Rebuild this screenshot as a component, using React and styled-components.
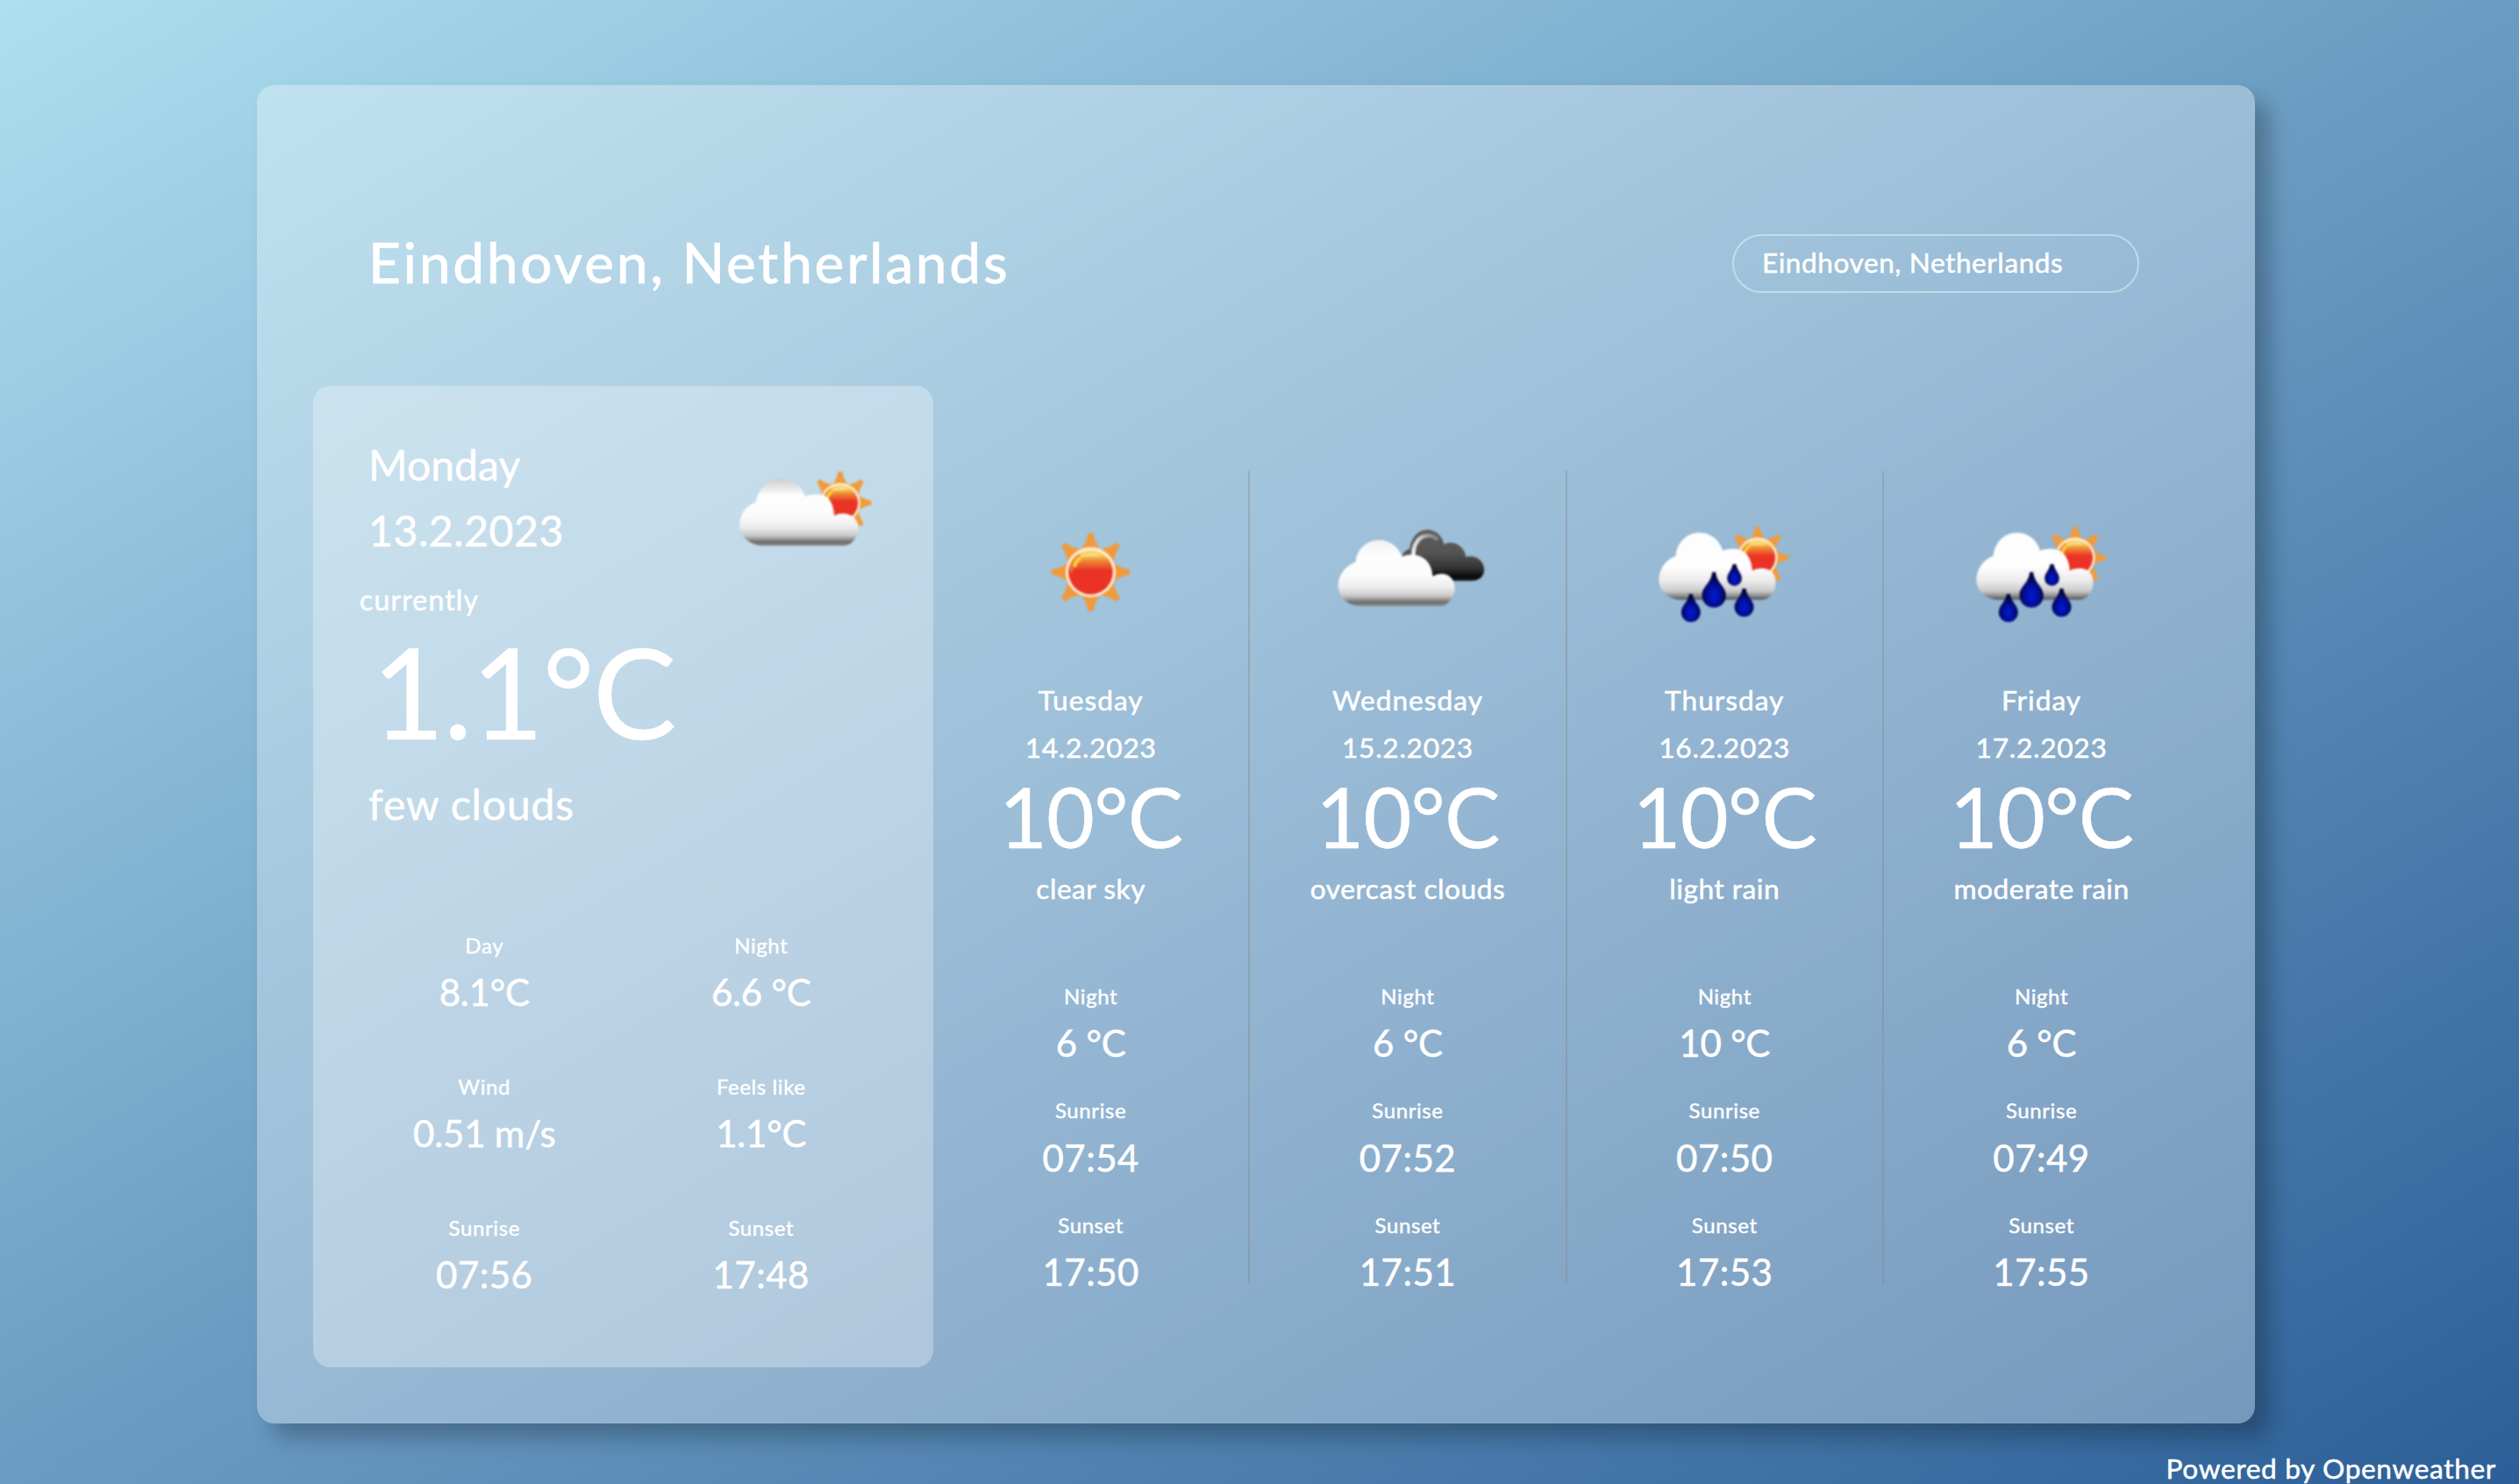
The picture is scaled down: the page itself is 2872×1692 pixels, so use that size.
import React from 'react';
import styled, { createGlobalStyle } from 'styled-components';

const GlobalStyle = createGlobalStyle`
  *, *::before, *::after { box-sizing: border-box; }
  body {
    margin: 0;
    color: #fff;
    font-family: Lato, "Open Sans", sans-serif;
    font-weight: 400;
  }
`;

const Page = styled.div`
  display: flex;
  flex-direction: column;
  align-items: center;
  height: 1692px;
  padding-top: 97px;
  overflow: hidden;
  background: linear-gradient(to bottom right, #addfef, #6a9cc3 50%, #2c5f97);
`;

const Card = styled.main`
  display: flex;
  flex-direction: column;
  width: 2278px;
  height: 1526px;
  margin-right: 8px;
  border-radius: 20px;
  background: rgba(255, 255, 255, 0.32);
  box-shadow: 17px 17px 24px rgba(0, 0, 0, 0.25);
`;

const Header = styled.header`
  display: flex;
  align-items: center;
  justify-content: space-between;
  height: 343px;
  padding: 64px 132px 0 127px;
`;

const City = styled.h1`
  margin: 0;
  padding-bottom: 3px;
  font-size: 64px;
  font-weight: 500;
  line-height: 88px;
  letter-spacing: 2.65px;
  -webkit-text-stroke: 0.4px #fff;
`;

const Search = styled.div`
  display: flex;
  align-items: center;
  width: 464px;
  height: 67px;
  padding: 0 32px 4px;
  border: 2px solid rgba(255, 255, 255, 0.42);
  border-radius: 34px;
  font-size: 31.5px;
  letter-spacing: 0.6px;
  -webkit-text-stroke: 0.5px #fff;
`;

const Body = styled.div`
  display: flex;
  padding-left: 64px;
`;

const Today = styled.section`
  width: 707px;
  height: 1119px;
  padding: 51px 46px 0 63px;
  border-radius: 20px;
  background: rgba(255, 255, 255, 0.3);
`;

const TodayTop = styled.div`
  display: flex;
  justify-content: space-between;
  height: 213px;
`;

const TodayText = styled.div`
  padding-top: 1px;
`;

const TodayLine = styled.div`
  font-size: 48px;
  line-height: 75px;
  letter-spacing: ${(p) => p.$spacing}px;
  -webkit-text-stroke: 0.5px #fff;
`;

const Currently = styled.div`
  margin: 21px 0 0 -10px;
  font-size: 32px;
  line-height: 42px;
  letter-spacing: 1.15px;
  -webkit-text-stroke: 0.5px #fff;
`;

const TodayTemp = styled.div`
  margin: 8px 0 15px 4px;
  font-size: 143px;
  line-height: 152px;
  letter-spacing: -1.7px;
  -webkit-text-stroke: 0.4px #fff;
`;

const DetailGrid = styled.div`
  display: grid;
  grid-template-columns: repeat(2, 315.5px);
  justify-content: center;
  row-gap: 63.8px;
  margin-top: 108px;
  margin-right: 18px;
`;

const DetailBox = styled.div`
  display: flex;
  flex-direction: column;
  align-items: center;
  gap: 9.3px;
`;

const Label = styled.div`
  font-size: 24px;
  line-height: 32px;
  letter-spacing: 0.6px;
  -webkit-text-stroke: 0.4px #fff;
`;

const Value = styled.div`
  font-size: 42px;
  line-height: 56px;
  white-space: pre;
  letter-spacing: ${(p) => (p.$clock ? 0.48 : -0.2)}px;
  -webkit-text-stroke: 0.5px #fff;
`;

const Forecast = styled.section`
  display: grid;
  grid-template-columns: repeat(4, 361.3px);
  height: 926px;
  margin-top: 97px;
`;

const DayColumn = styled.article`
  display: flex;
  flex-direction: column;
  align-items: center;
  height: 926px;
  padding-top: 15px;
  border-right: 2px solid rgba(128, 128, 128, 0.35);

  &:last-child {
    border-right-color: transparent;
  }
`;

const DayLine = styled.div`
  font-size: 31.7px;
  line-height: 54px;
  letter-spacing: ${(p) => p.$spacing}px;
  -webkit-text-stroke: 0.5px #fff;
`;

const DayNames = styled.div`
  display: flex;
  flex-direction: column;
  align-items: center;
  margin-top: 19px;
`;

const DayTemp = styled.div`
  margin: 1px 0 6px;
  font-size: 95px;
  line-height: 100px;
  letter-spacing: -0.9px;
  -webkit-text-stroke: 0.4px #fff;
`;

const DayDetails = styled.div`
  display: flex;
  flex-direction: column;
  gap: 33px;
  margin-top: 80px;
`;

const Footer = styled.footer`
  align-self: stretch;
  margin-top: 33px;
  padding-right: 26px;
  text-align: right;
  font-size: 31.6px;
  line-height: 36px;
  letter-spacing: 0.65px;
  -webkit-text-stroke: 0.5px #fff;
`;

const Art = styled.svg`
  display: block;
  width: 200px;
  height: 200px;
  flex: none;
  filter: blur(1px);
`;

const RAY = 'M-32,-80 Q-15,-98 -9,-133 L9,-133 Q15,-98 32,-80 Z';

function SunShape({ id, x, y, scale = 1 }) {
  return (
    <g transform={`translate(${x} ${y}) scale(${scale})`}>
      <defs>
        <linearGradient id={id} x1="0" y1="0" x2="0" y2="1">
          <stop offset="0" stopColor="#f9e07e" />
          <stop offset="0.12" stopColor="#f7cc5a" />
          <stop offset="0.24" stopColor="#ee8a36" />
          <stop offset="0.46" stopColor="#ea3324" />
          <stop offset="1" stopColor="#ea3324" />
        </linearGradient>
      </defs>
      {[0, 45, 90, 135, 180, 225, 270, 315].map((a) => (
        <path key={a} d={RAY} fill="#f19a3c" transform={`rotate(${a})`} />
      ))}
      <circle r="86" fill="#f8dcb4" />
      <circle r="82" fill="#fdf3e6" />
      <circle r="76" fill={`url(#${id})`} />
      <path d="M-66,0 Q-66,-46 -36,-60" fill="none" stroke="#ee8a2e" strokeWidth="10" opacity="0.7" />
      <path d="M-54,-22 Q-50,-38 -38,-46" fill="none" stroke="#f9d23c" strokeWidth="12" strokeLinecap="round" />
      <path d="M-32,-54 Q-8,-60 26,-58" fill="none" stroke="#fbe7a4" strokeWidth="5" strokeLinecap="round" />
    </g>
  );
}

function CloudFill({ id, top = '#fdfdfd' }) {
  return (
    <linearGradient id={id} x1="0" y1="0" x2="0" y2="1">
      <stop offset="0" stopColor={top} />
      <stop offset="0.25" stopColor="#fefefe" />
      <stop offset="0.55" stopColor="#fbfbfb" />
      <stop offset="0.72" stopColor="#ececec" />
      <stop offset="0.84" stopColor="#cbcbcb" />
      <stop offset="0.89" stopColor="#a2a2a2" />
      <stop offset="0.94" stopColor="#6c6c6c" />
      <stop offset="1" stopColor="#8a8a8a" />
    </linearGradient>
  );
}

function FewClouds() {
  return (
    <Art viewBox="114 -30 600 600">
      <SunShape id="sunFew" x={534} y={217} scale={0.8} />
      <defs>
        <CloudFill id="cloudFew" top="#cdcdcd" />
      </defs>
      <path
        fill="url(#cloudFew)"
        d="M190,285 C194,248 215,225 245,215 C255,165 290,135 332,135 C370,135 402,158 414,195 C432,187 474,184 490,198 C504,212 512,234 514,261 C535,248 572,252 588,275 C600,295 597,322 582,343 C570,358 558,364 545,364 L265,364 C225,360 185,330 190,285Z"
      />
    </Art>
  );
}

function ClearSky() {
  return (
    <Art viewBox="-49.5 -84 600 600">
      <SunShape id="sunClear" x={249} y={217} />
    </Art>
  );
}

function Overcast() {
  return (
    <Art viewBox="73.5 -54 600 600">
      <defs>
        <CloudFill id="cloudOvercast" top="#f1f1f1" />
        <linearGradient id="cloudDark" x1="0" y1="0" x2="0" y2="1">
          <stop offset="0" stopColor="#5c5c5c" />
          <stop offset="0.45" stopColor="#545454" />
          <stop offset="0.75" stopColor="#343434" />
          <stop offset="0.92" stopColor="#080808" />
          <stop offset="1" stopColor="#222" />
        </linearGradient>
        <linearGradient id="rim" x1="0" y1="1" x2="1" y2="0">
          <stop offset="0" stopColor="#f4f4f4" />
          <stop offset="0.55" stopColor="#d2d2d2" />
          <stop offset="1" stopColor="#777" />
        </linearGradient>
      </defs>
      <path
        fill="url(#cloudDark)"
        d="M354,198 C356,180 366,172 380,168 C385,128 410,102 440,102 C470,102 490,122 498,152 C524,136 566,152 573,195 C598,186 632,202 635,235 C636,260 620,276 595,277 L520,277 L420,277Z"
      />
      <path fill="none" stroke="url(#rim)" strokeWidth="14" strokeLinecap="round" d="M393,190 C392,150 412,124 440,122 C454,120 464,124 472,132" />
      <path
        fill="url(#cloudOvercast)"
        d="M136,285 C140,250 165,223 195,213 C200,165 235,137 275,137 C312,137 344,160 354,195 C377,180 415,186 435,205 C450,220 458,240 459,262 C480,246 516,250 528,275 C540,300 535,330 515,348 C505,360 495,363 480,363 L205,363 C170,360 132,330 136,285Z"
      />
    </Art>
  );
}

const DROPS = [
  [202, 322, 418, 33],
  [281, 247, 368, 41],
  [351, 220, 294, 25],
  [384, 303, 400, 33],
];

function Rain({ id }) {
  return (
    <Art viewBox="16.5 -54 600 600">
      <SunShape id={`${id}Sun`} x={430} y={197} scale={0.8} />
      <defs>
        <linearGradient id={`${id}Cloud`} x1="0" y1="0" x2="0" y2="1">
          <stop offset="0" stopColor="#fdfdfd" />
          <stop offset="0.5" stopColor="#fefefe" />
          <stop offset="0.72" stopColor="#ebebeb" />
          <stop offset="0.87" stopColor="#cbcbcb" />
          <stop offset="0.93" stopColor="#9a9a9a" />
          <stop offset="1" stopColor="#555" />
        </linearGradient>
        <radialGradient id={`${id}Drop`} cx="0.5" cy="0.66" r="0.5">
          <stop offset="0" stopColor="#0219d0" />
          <stop offset="0.4" stopColor="#0212b0" />
          <stop offset="0.75" stopColor="#030b7c" />
          <stop offset="1" stopColor="#04063c" />
        </radialGradient>
      </defs>
      <path
        fill={`url(#${id}Cloud)`}
        d="M93,265 C98,228 120,203 150,192 C155,142 192,112 232,112 C270,112 300,138 311,174 C335,163 378,163 396,190 C406,205 411,222 412,242 C430,230 470,230 484,252 C496,272 495,300 480,322 C470,336 460,341 445,341 L160,341 C125,338 88,310 93,265Z"
      />
      {DROPS.map(([x, top, bottom, r]) => {
        const cy = bottom - r;
        return (
          <path
            key={x}
            fill={`url(#${id}Drop)`}
            d={`M${x - 6},${top} L${x + 6},${top} C${x + 10},${cy - r} ${x + r},${cy - r * 0.75} ${x + r},${cy} A${r},${r} 0 0 1 ${x - r},${cy} C${x - r},${cy - r * 0.75} ${x - 10},${cy - r} ${x - 6},${top}Z`}
          />
        );
      })}
    </Art>
  );
}

function Detail({ label, value }) {
  return (
    <DetailBox>
      <Label>{label}</Label>
      <Value $clock={value.includes(':')}>{value}</Value>
    </DetailBox>
  );
}

const TODAY = [
  ['Day', '8.1°C'],
  ['Night', '6.6 °C'],
  ['Wind', '0.51 m/s'],
  ['Feels like', '1.1°C'],
  ['Sunrise', '07:56'],
  ['Sunset', '17:48'],
];

const DAYS = [
  { name: 'Tuesday', date: '14.2.2023', temp: '10°C', text: 'clear sky', night: '6 °C', rise: '07:54', set: '17:50', icon: <ClearSky /> },
  { name: 'Wednesday', date: '15.2.2023', temp: '10°C', text: 'overcast clouds', night: '6 °C', rise: '07:52', set: '17:51', icon: <Overcast /> },
  { name: 'Thursday', date: '16.2.2023', temp: '10°C', text: 'light rain', night: '10 °C', rise: '07:50', set: '17:53', icon: <Rain id="thu" /> },
  { name: 'Friday', date: '17.2.2023', temp: '10°C', text: 'moderate rain', night: '6 °C', rise: '07:49', set: '17:55', icon: <Rain id="fri" /> },
];

export default function App() {
  return (
    <>
      <GlobalStyle />
      <Page>
        <Card>
          <Header>
            <City>Eindhoven, Netherlands</City>
            <Search>Eindhoven, Netherlands</Search>
          </Header>
          <Body>
            <Today>
              <TodayTop>
                <TodayText>
                  <TodayLine $spacing={0.1}>Monday</TodayLine>
                  <TodayLine $spacing={0.6}>13.2.2023</TodayLine>
                  <Currently>currently</Currently>
                </TodayText>
                <FewClouds />
              </TodayTop>
              <TodayTemp>1.1°C</TodayTemp>
              <TodayLine $spacing={0.9}>few clouds</TodayLine>
              <DetailGrid>
                {TODAY.map(([label, value]) => (
                  <Detail key={label} label={label} value={value} />
                ))}
              </DetailGrid>
            </Today>
            <Forecast>
              {DAYS.map((d) => (
                <DayColumn key={d.name}>
                  {d.icon}
                  <DayNames>
                    <DayLine $spacing={1}>{d.name}</DayLine>
                    <DayLine $spacing={0.7}>{d.date}</DayLine>
                  </DayNames>
                  <DayTemp>{d.temp}</DayTemp>
                  <DayLine $spacing={0.5}>{d.text}</DayLine>
                  <DayDetails>
                    <Detail label="Night" value={d.night} />
                    <Detail label="Sunrise" value={d.rise} />
                    <Detail label="Sunset" value={d.set} />
                  </DayDetails>
                </DayColumn>
              ))}
            </Forecast>
          </Body>
        </Card>
        <Footer>Powered by Openweather</Footer>
      </Page>
    </>
  );
}
